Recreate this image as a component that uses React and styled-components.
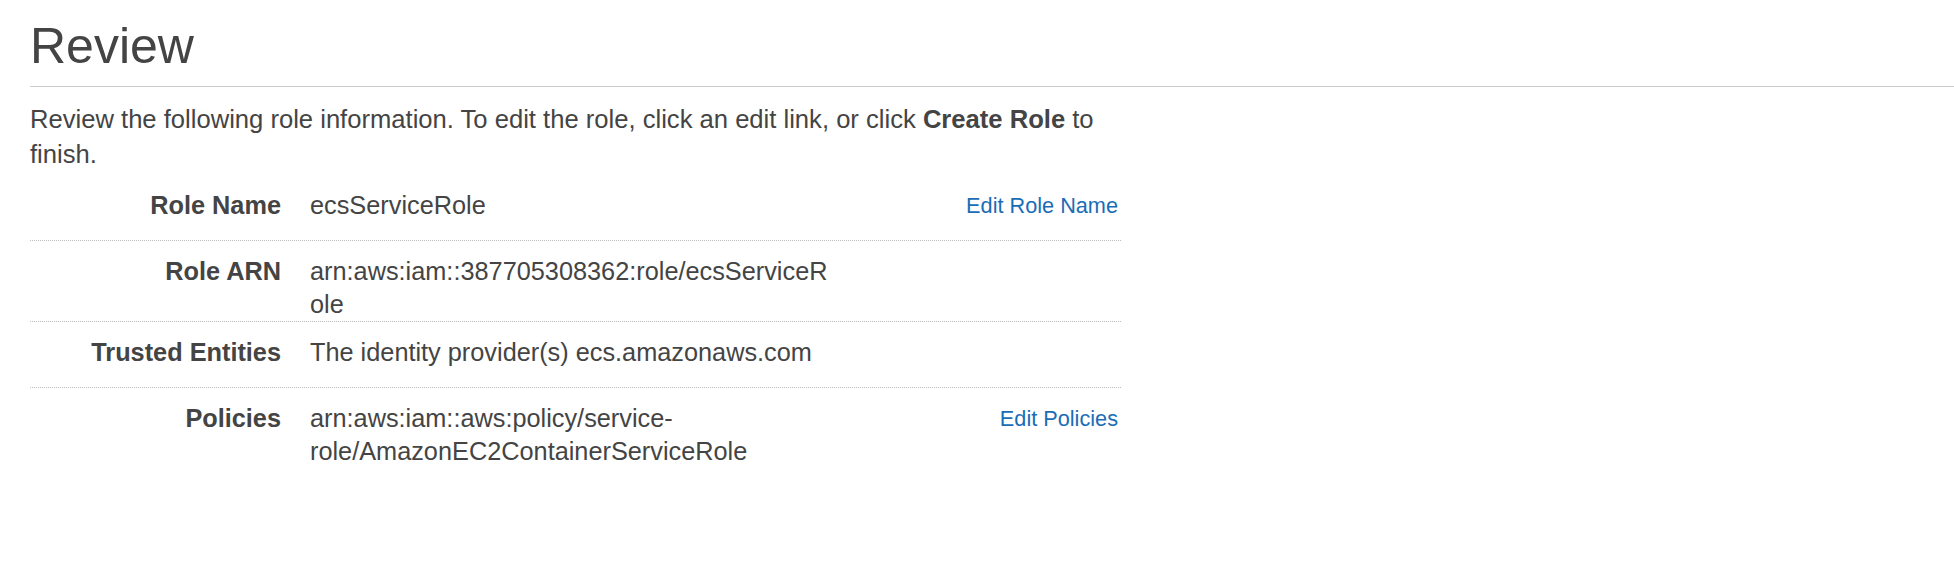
import styled, { createGlobalStyle } from 'styled-components';

const GlobalStyle = createGlobalStyle`
  body {
    margin: 0;
    background: #fff;
    font-family: "Liberation Sans", Arial, Helvetica, sans-serif;
    color: #444;
  }
`;

const Page = styled.div`
  padding-left: 30px;
`;

const Title = styled.h1`
  margin: 19px 0 0;
  padding-bottom: 12px;
  border-bottom: 1px solid #ccc;
  font-size: 50px;
  line-height: 55px;
  font-weight: normal;
  color: #444;
`;

const Intro = styled.p`
  width: 1091px;
  margin: 15px 0 3px;
  font-size: 25.6px;
  line-height: 35px;

  strong {
    font-weight: bold;
  }
`;

const Details = styled.div`
  width: 1091px;
`;

const Row = styled.div`
  display: grid;
  grid-template-columns: 251px 525px 1fr;
  column-gap: 29px;
  align-items: start;
  min-height: 51px;
  padding-top: 14px;
  border-bottom: 1px dotted #bdbdbd;
  font-size: 25.3px;
  line-height: 33px;

  &:last-child {
    border-bottom: none;
  }
`;

const Label = styled.div`
  text-align: right;
  font-weight: bold;
`;

const Value = styled.div`
  overflow-wrap: break-word;
  min-width: 0;
`;

const EditLink = styled.a`
  justify-self: end;
  padding-right: 3px;
  font-size: 21.7px;
  color: #1a6db5;
  text-decoration: none;
  cursor: pointer;
`;

const rows = [
  { label: 'Role Name', value: 'ecsServiceRole', link: 'Edit Role Name' },
  { label: 'Role ARN', value: 'arn:aws:iam::387705308362:role/ecsServiceRole' },
  {
    label: 'Trusted Entities',
    value: 'The identity provider(s) ecs.amazonaws.com',
  },
  {
    label: 'Policies',
    value: 'arn:aws:iam::aws:policy/service-role/AmazonEC2ContainerServiceRole',
    link: 'Edit Policies',
  },
];

const App = () => {
  return (
    <Page>
      <GlobalStyle />
      <Title>Review</Title>
      <Intro>
        Review the following role information. To edit the role, click an edit
        link, or click <strong>Create Role</strong> to finish.
      </Intro>
      <Details>
        {rows.map((row) => (
          <Row key={row.label}>
            <Label>{row.label}</Label>
            <Value>{row.value}</Value>
            {row.link && <EditLink>{row.link}</EditLink>}
          </Row>
        ))}
      </Details>
    </Page>
  );
};

export default App;
